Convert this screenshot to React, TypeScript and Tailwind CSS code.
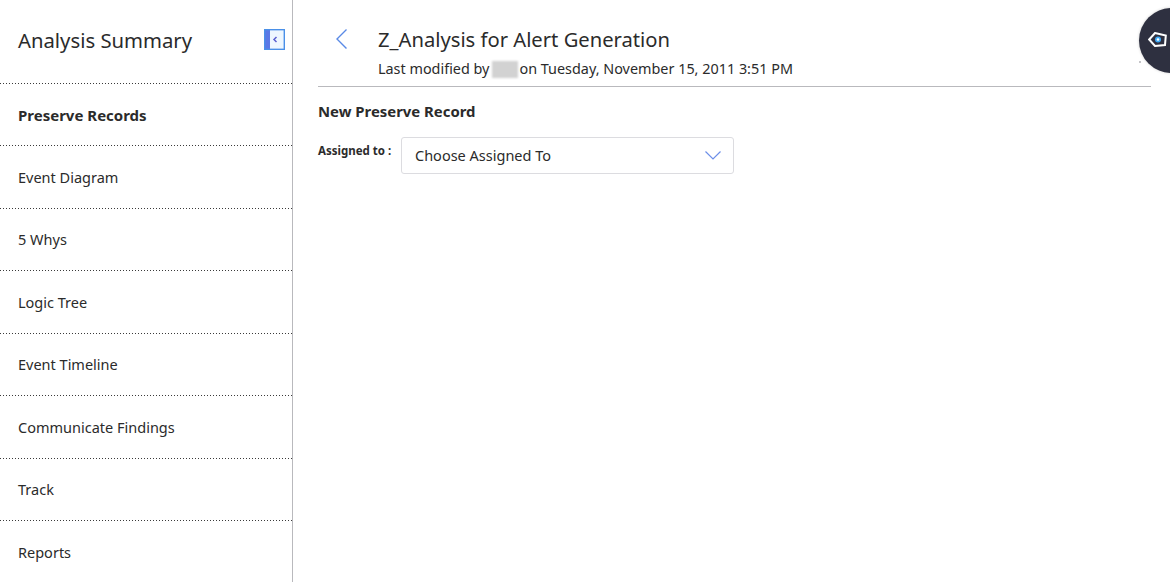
import React from "react";

const navItems = [
  "Preserve Records",
  "Event Diagram",
  "5 Whys",
  "Logic Tree",
  "Event Timeline",
  "Communicate Findings",
  "Track",
  "Reports",
];

const dottedRule =
  "bg-[repeating-linear-gradient(90deg,#3a3a3a_0_1px,transparent_1px_3px)] bg-bottom bg-no-repeat bg-[length:100%_1px]";

function CollapseIcon() {
  return (
    <svg width="21" height="21" viewBox="0 0 21 21" fill="none">
      <rect x="0" y="0" width="6" height="21" fill="#5a78e6" />
      <rect x="6" y="1.5" width="14" height="18" fill="#eef7ff" />
      <rect x="0.7" y="0.7" width="19.6" height="19.6" stroke="#4a90e8" strokeWidth="1.4" />
      <path d="M12.5 8 L10 10.5 L12.5 13" stroke="#5b5fd0" strokeWidth="1.5" />
    </svg>
  );
}

function Sidebar() {
  return (
    <aside className="w-[293px] h-full shrink-0 border-r border-[#b9b9bd] flex flex-col overflow-hidden">
      <div className={`h-[83.6px] shrink-0 ${dottedRule} pl-[18px] pr-[7px] flex items-center justify-between`}>
        <h1 className="text-[20.3px] leading-none mb-[3px] text-[#2b2b2b]">Analysis Summary</h1>
        <div className="mb-[4px] flex">
          <CollapseIcon />
        </div>
      </div>
      {navItems.map((item, idx) => (
        <div
          key={item}
          className={`h-[62.5px] shrink-0 pl-[18px] flex items-center text-[14.5px] text-[#2b2b2b] ${
            idx < navItems.length - 1 ? dottedRule : ""
          } ${idx === 0 ? "font-bold text-[15px] pt-[0px]" : "pt-[1px]"}`}
        >
          {item}
        </div>
      ))}
    </aside>
  );
}

function Header() {
  return (
    <div className="h-[87px] ml-[25px] mr-[19px] border-b border-[#b9b9bd] flex items-start">
      <svg width="14" height="22" viewBox="0 0 14 22" fill="none" className="ml-[17px] mt-[28px]">
        <path d="M11.5 1.5 L2 11 L11.5 20.5" stroke="#5a8ae6" strokeWidth="1.4" />
      </svg>
      <div className="ml-[29px] mt-[25px]">
        <div className="text-[20.2px] leading-[28px] text-[#2b2b2b]">Z_Analysis for Alert Generation</div>
        <div className="text-[14.4px] leading-[20px] mt-[6px] text-[#2b2b2b] flex items-center whitespace-nowrap">
          Last modified by
          <span className="inline-block w-[26px] h-[17px] bg-[#d2d2d2] blur-[1px] ml-[3px] mr-[1px]" />
          on Tuesday, November 15, 2011 3:51 PM
        </div>
      </div>
    </div>
  );
}

export default function App() {
  return (
    <div
      className="relative w-[1170px] h-[582px] bg-white flex overflow-hidden"
      style={{ fontFamily: '"Noto Sans", sans-serif' }}
    >
      <Sidebar />
      <main className="flex-1 min-w-0">
        <Header />
        <div className="ml-[25px] mt-[14px]">
          <h2 className="text-[14.9px] leading-[20px] font-bold text-[#2b2b2b]">New Preserve Record</h2>
          <div className="mt-[16px] flex items-start">
            <label className="w-[83px] mt-[5px] text-[11.5px] leading-[18px] font-bold text-[#2b2b2b]">
              Assigned to :
            </label>
            <div className="w-[333px] h-[37px] border border-[#dcdce0] rounded-[3px] pl-[13px] pr-[12px] flex items-center justify-between text-[14.5px] text-[#2b2b2b]">
              Choose Assigned To
              <svg width="16" height="9" viewBox="0 0 16 9" fill="none">
                <path d="M0.5 0.5 L8 8 L15.5 0.5" stroke="#6d8fe8" strokeWidth="1.2" />
              </svg>
            </div>
          </div>
        </div>
      </main>
      <div className="absolute left-[1139px] top-[8px] w-[66px] h-[65px] rounded-full bg-[#2e3040] shadow-[0_0_3px_rgba(0,0,0,0.2)] pl-[9px] pb-[3px] flex items-center">
        <svg width="19" height="15" viewBox="0 0 19 15" fill="none">
          <path d="M1.2 7.5 L7 1 L17.8 3.5 L17 13 L7 14 Z" stroke="white" strokeWidth="2" />
          <circle cx="10" cy="7.5" r="3" fill="#3fa9f5" />
          <circle cx="10" cy="7.5" r="1.3" fill="white" />
        </svg>
      </div>
      <div className="absolute left-[1139px] top-[61px] w-[2px] h-[2px] bg-[#c4c4c8]" />
    </div>
  );
}
